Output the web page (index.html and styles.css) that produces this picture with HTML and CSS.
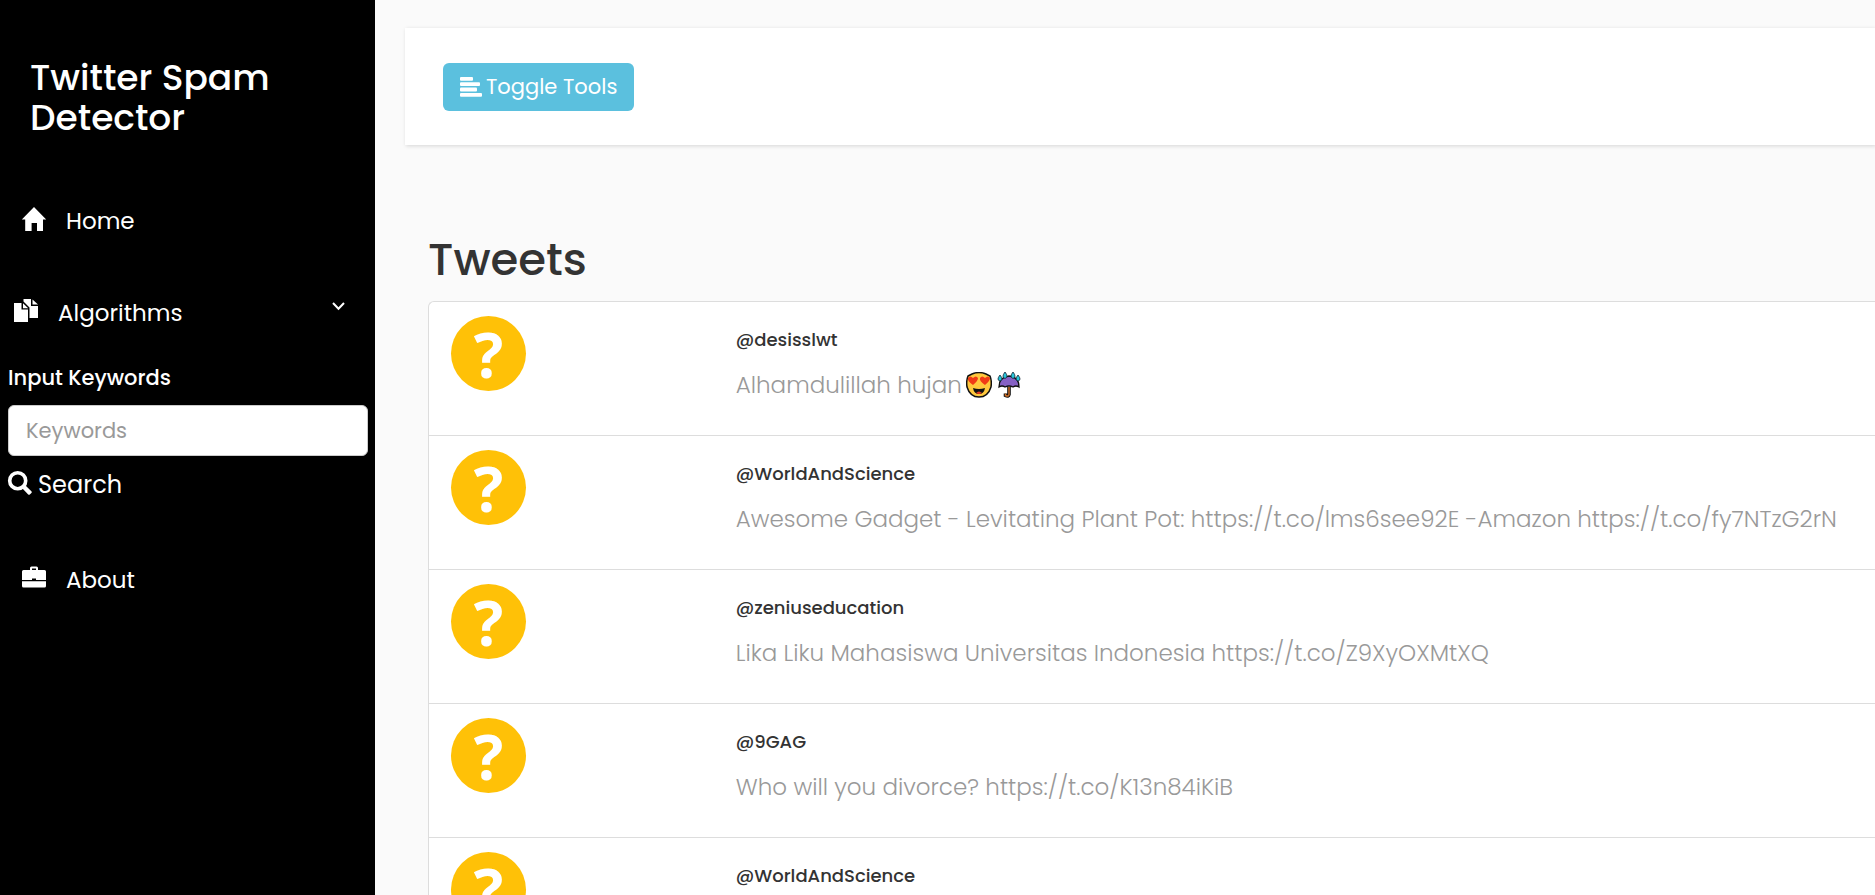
FILE: index.html
```html
<!DOCTYPE html>
<html lang="en">
<head>
<meta charset="utf-8">
<title>Twitter Spam Detector</title>
<link rel="stylesheet" href="styles.css">
</head>
<body>
<div class="wrapper">
  <aside class="sidebar">
    <h3 class="brand">Twitter Spam Detector</h3>
    <nav class="menu">
      <a class="menu-link" href="#">
        <svg class="icon" viewBox="0 0 24 24" aria-hidden="true"><path d="M12 0L24.200 12.600H21V24H15V16H9.600V24H3.200V12.600H-.2Z"/></svg>
        Home
      </a>
      <a class="menu-link menu-parent" href="#">
        <svg class="icon" viewBox="0 0 24 24" aria-hidden="true"><path d="M0 4H7.500V10.500H14V23H0ZM9 4.200L14.200 9.200H9ZM9.500 0H17V7H24V19H15.500V8.500L9.500 2.500ZM18.500 .5L24 5.500H18.500Z"/></svg>
        <span class="menu-text">Algorithms</span>
        <svg class="chevron" viewBox="0 0 13 9" aria-hidden="true"><path d="M1 1L6.500 6.800L12 1"/></svg>
      </a>
      <form class="search">
        <label class="search-label" for="keywords">Input Keywords</label>
        <input class="search-input" id="keywords" type="text" placeholder="Keywords">
        <button class="search-button" type="button">
          <svg class="icon" viewBox="0 0 24 24" aria-hidden="true"><circle cx="9.700" cy="9.700" r="8" fill="none" stroke="currentColor" stroke-width="3.600"/><path d="M14 17L17 14L23.600 20.400Q24.200 21.200 23.400 22L21.800 23.600Q21 24.200 20.200 23.400Z"/></svg>
          Search
        </button>
      </form>
      <a class="menu-link" href="#">
        <svg class="icon" viewBox="0 0 24 24" aria-hidden="true"><path fill-rule="evenodd" d="M8 4V2Q8 .5 9.500 .5H14.500Q16 .5 16 2V4H22.500Q24 4 24 5.500V14H14V12.500H10V14H0V5.500Q0 4 1.500 4ZM10 4H14V2.500H10ZM0 15.300H24V20Q24 21.500 22.500 21.500H1.500Q0 21.500 0 20Z"/></svg>
        About
      </a>
    </nav>
  </aside>
  <main class="content">
    <div class="toolbar">
      <button class="toggle" type="button">
        <svg class="toggle-icon" viewBox="0 0 22 20" aria-hidden="true"><rect y="0" width="13" height="3.800" rx="1"/><rect y="5.300" width="20" height="3.800" rx="1"/><rect y="10.600" width="17" height="3.800" rx="1"/><rect y="16" width="22" height="3.800" rx="1"/></svg>
        Toggle Tools
      </button>
    </div>
    <section class="tweets">
      <h2 class="heading">Tweets</h2>
      <ul class="list">
        <li class="tweet">
          <span class="avatar">?</span>
          <div>
            <h4 class="handle">@desisslwt</h4>
            <p class="text">Alhamdulillah hujan<svg class="emoji" viewBox="0 0 26 26" role="img" aria-label="Heart eyes"><path d="M2 4L6 2Q13-1 20 2L24 4Q26 9 25 15Q22 25 13 25Q4 25 1 15Q0 9 2 4Z" fill="#ffc83d" stroke="#111" stroke-width="1.500"/><path d="M7 13Q1 9 2 6Q4 3 7 6Q10 3 12 6Q12 9 7 13ZM19 13Q13 9 14 6Q16 3 19 6Q22 3 24 6Q24 9 19 13Z" fill="#f03a17"/><path d="M7 16Q13 18 19 16Q18 22 13 22Q8 22 7 16Z" fill="#111"/><path d="M10 21Q13 18 16 21Q13 23 10 21Z" fill="#e33a20"/></svg><svg class="emoji" viewBox="0 0 26 26" role="img" aria-label="Umbrella with rain drops"><path d="M13 15V22.500Q12.500 25 9.500 23.500V21.500" fill="none" stroke="#111" stroke-width="3.600"/><path d="M13 15V22.500Q12.500 25 9.500 23.500V21.500" fill="none" stroke="#ca6b25" stroke-width="1.500"/><path d="M3 15Q3 5 13 4Q23 5 23 15Q20 13 17 15Q13 13 9 15Q6 13 3 15Z" fill="#8661c5" stroke="#111" stroke-width="1.300"/><path d="M4 3Q8 8 4 9Q0 8 4 3ZM9 0Q13 5 9 6.500Q5 5 9 0ZM17 0Q21 5 17 6.500Q13 5 17 0ZM22 3Q26 8 22 9Q18 8 22 3Z" fill="#26c6da" stroke="#123" stroke-width=".8"/></svg></p>
          </div>
        </li>
        <li class="tweet">
          <span class="avatar">?</span>
          <div>
            <h4 class="handle">@WorldAndScience</h4>
            <p class="text">Awesome Gadget - Levitating Plant Pot: https://t.co/lms6see92E -Amazon https://t.co/fy7NTzG2rN</p>
          </div>
        </li>
        <li class="tweet">
          <span class="avatar">?</span>
          <div>
            <h4 class="handle">@zeniuseducation</h4>
            <p class="text">Lika Liku Mahasiswa Universitas Indonesia https://t.co/Z9XyOXMtXQ</p>
          </div>
        </li>
        <li class="tweet">
          <span class="avatar">?</span>
          <div>
            <h4 class="handle">@9GAG</h4>
            <p class="text">Who will you divorce? https://t.co/K13n84iKiB</p>
          </div>
        </li>
        <li class="tweet">
          <span class="avatar">?</span>
          <div>
            <h4 class="handle">@WorldAndScience</h4>
            <p class="text">&nbsp;</p>
          </div>
        </li>
      </ul>
    </section>
  </main>
</div>
</body>
</html>
```
FILE: styles.css
```css
* {
  box-sizing: border-box;
}

body {
  margin: 0;
  background: #fafafa;
  color: #333;
  font-family: Poppins, Inter, "Open Sans", sans-serif;
  font-size: 23px;
  line-height: 34px;
}

.wrapper {
  display: flex;
  height: 100vh;
  overflow: hidden;
}

.sidebar {
  flex: 0 0 20%;
  background: #000;
  color: #fff;
}

.brand {
  margin: 0;
  padding: 58px 30px 0;
  font-size: 36px;
  font-weight: 500;
  line-height: 40px;
}

.menu {
  display: flex;
  flex-direction: column;
  padding-top: 51px;
}

.menu-link {
  display: flex;
  align-items: center;
  gap: 20px;
  padding: 15px 22px;
  color: #fff;
  text-decoration: none;
}

.menu-parent {
  margin-top: 28px;
  padding: 15px 30px 15px 14px;
}

.menu-text {
  flex: 1;
}

.icon {
  width: 24px;
  height: 24px;
  margin-bottom: 4px;
  flex: none;
  overflow: visible;
  fill: currentColor;
}

.chevron {
  width: 13px;
  height: 9px;
  margin-bottom: 13px;
  fill: none;
  stroke: currentColor;
  stroke-width: 2;
}

.search {
  display: flex;
  flex-direction: column;
  align-items: stretch;
  padding: 16px 7px 46px 8px;
}

.search-label {
  margin-bottom: 10px;
  font-size: 21px;
  font-weight: 500;
}

.search-input {
  width: 100%;
  height: 51px;
  padding: 8px 17px;
  border: 1px solid #ccc;
  border-radius: 6px;
  background: #fff;
  font: inherit;
  font-size: 21px;
  color: #555;
}

.search-input::placeholder {
  color: #999;
  opacity: 1;
}

.search-button {
  display: flex;
  align-items: center;
  align-self: flex-start;
  gap: 6px;
  margin-top: 12px;
  padding: 0;
  border: 0;
  background: none;
  color: #fff;
  font: inherit;
  font-size: 24px;
}

.content {
  flex: 1;
  min-width: 0;
  padding: 28px 0 0 30px;
}

.toolbar {
  padding: 35px 38px 34px;
  background: #fff;
  box-shadow: 1px 1px 4px rgba(0, 0, 0, 0.15);
}

.toggle {
  display: flex;
  align-items: center;
  gap: 4px;
  height: 48px;
  padding: 0 17px;
  border: 0;
  border-radius: 6px;
  background: #5bc0de;
  color: #fff;
  font: inherit;
  font-size: 21px;
}

.toggle-icon {
  width: 22px;
  height: 20px;
  fill: currentColor;
}

.tweets {
  padding: 90px 0 0 23px;
}

.heading {
  margin: 0 0 16px;
  font-size: 45px;
  font-weight: 500;
  line-height: 50px;
}

.list {
  margin: 0;
  padding: 0;
  list-style: none;
  border: 1px solid #ddd;
  border-right: 0;
  border-radius: 6px 0 0 0;
  background: #fff;
}

.tweet {
  display: grid;
  grid-template-columns: 1fr 4fr;
  padding: 14px 0 15px 22px;
  border-bottom: 1px solid #ddd;
}

.avatar {
  display: flex;
  align-items: center;
  justify-content: center;
  width: 75px;
  height: 75px;
  border-radius: 50%;
  background: #ffc107;
  color: #fff;
  font-family: "Open Sans", sans-serif;
  font-size: 62px;
  font-weight: 700;
}

.handle {
  margin: 8px 0 12px;
  font-size: 18px;
  font-weight: 500;
  line-height: 32px;
}

.text {
  margin: 0 0 18px;
  color: #999;
  font-weight: 300;
  white-space: nowrap;
}

.emoji {
  width: 26px;
  height: 26px;
  margin-left: 4px;
  vertical-align: -5px;
}
```
